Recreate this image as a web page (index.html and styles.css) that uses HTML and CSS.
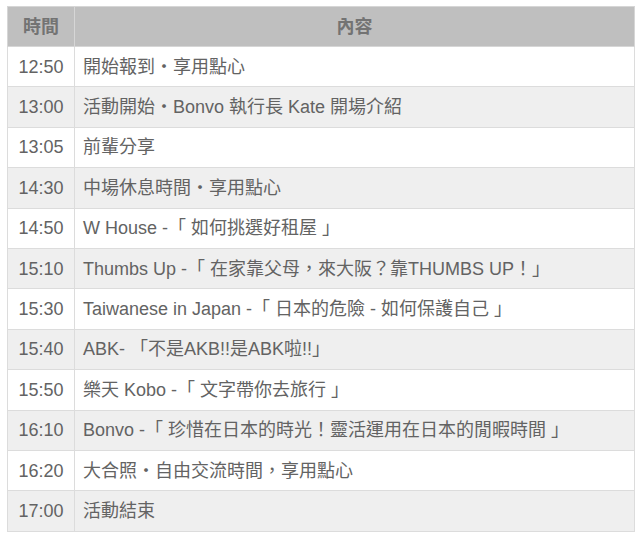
FILE: index.html
```html
<!DOCTYPE html>
<html lang="zh-Hant">
<head>
<meta charset="utf-8">
<title>活動流程</title>
<link rel="stylesheet" href="styles.css">
</head>
<body>
<table class="schedule">
  <thead>
    <tr><th class="time">時間</th><th>內容</th></tr>
  </thead>
  <tbody>
    <tr><td class="time">12:50</td><td>開始報到・享用點心</td></tr>
    <tr><td class="time">13:00</td><td>活動開始・Bonvo 執行長 Kate 開場介紹</td></tr>
    <tr><td class="time">13:05</td><td>前輩分享</td></tr>
    <tr><td class="time">14:30</td><td>中場休息時間・享用點心</td></tr>
    <tr><td class="time">14:50</td><td>W House -「 如何挑選好租屋 」</td></tr>
    <tr><td class="time">15:10</td><td>Thumbs Up -「 在家靠父母，來大阪？靠THUMBS UP！」</td></tr>
    <tr><td class="time">15:30</td><td>Taiwanese in Japan -「 日本的危險 - 如何保護自己 」</td></tr>
    <tr><td class="time">15:40</td><td>ABK- 「不是AKB!!是ABK啦!!」</td></tr>
    <tr><td class="time">15:50</td><td>樂天 Kobo -「 文字帶你去旅行 」</td></tr>
    <tr><td class="time">16:10</td><td>Bonvo -「 珍惜在日本的時光！靈活運用在日本的閒暇時間 」</td></tr>
    <tr><td class="time">16:20</td><td>大合照・自由交流時間，享用點心</td></tr>
    <tr><td class="time">17:00</td><td>活動結束</td></tr>
  </tbody>
</table>
</body>
</html>
```
FILE: styles.css
```css
html, body {
  margin: 0;
  background: #ffffff;
}
body {
  padding: 6px 7px;
  font-family: "Liberation Sans", Arial, "Noto Sans CJK TC", sans-serif;
  font-size: 18px;
  color: #636363;
}
.schedule {
  width: 628px;
  border-collapse: collapse;
  table-layout: fixed;
}
.schedule th,
.schedule td {
  border: 1px solid #dcdcdc;
  padding: 0 8px;
  text-align: left;
  white-space: nowrap;
  line-height: 20px;
}
.schedule th {
  height: 39px;
  background: #bfbfbf;
  color: #737373;
  font-weight: bold;
  text-align: center;
  border-color: #d6d6d6;
}
.schedule td {
  height: 39.4px;
}
.schedule th.time,
.schedule td.time {
  width: 50px;
  text-align: center;
  padding: 0 8px;
}
.schedule tbody tr:nth-child(even) td {
  background: #efefef;
}
```
